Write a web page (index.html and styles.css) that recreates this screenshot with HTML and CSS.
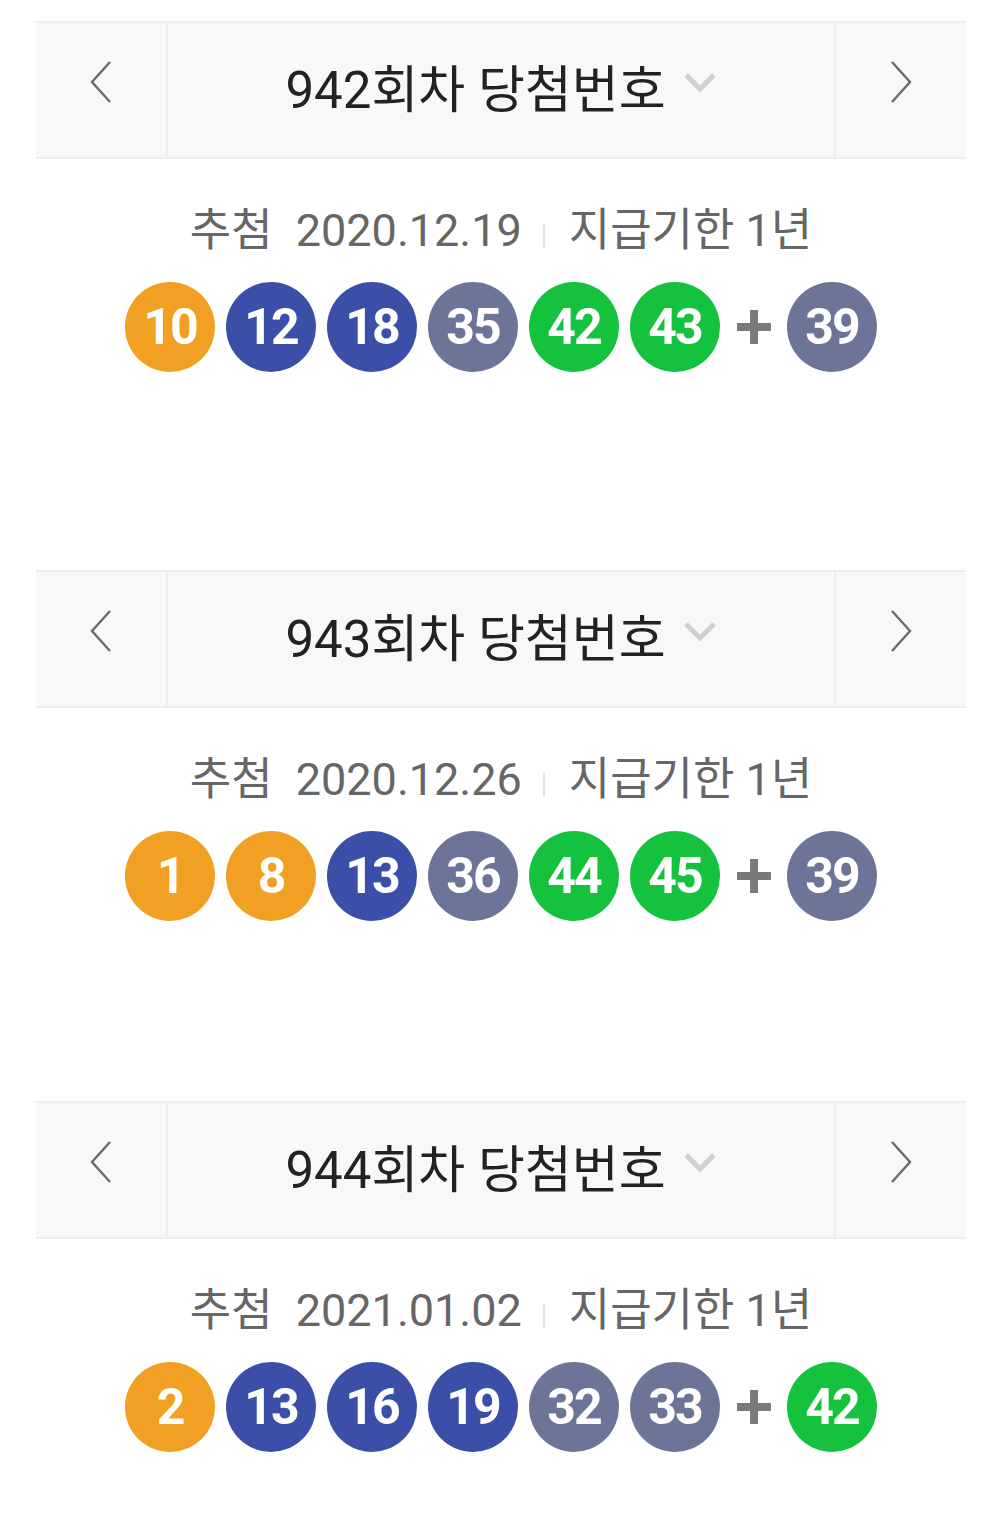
FILE: index.html
```html
<!DOCTYPE html>
<html lang="ko">
<head>
  <meta charset="UTF-8">
  <meta name="viewport" content="width=device-width, initial-scale=1.0">
  <title>당첨번호</title>
  <link rel="stylesheet" href="styles.css">
</head>
<body>
  <div class="draw draw-first">
    <div class="draw-head">
      <button class="nav-btn" type="button" aria-label="이전 회차">
        <svg width="24" height="44" viewBox="0 0 24 44"><path d="M21 2 L3 22 L21 42" fill="none" stroke="#6b6b6b" stroke-width="2.4"/></svg>
      </button>
      <div class="draw-title">
        <span>942회차 당첨번호</span>
        <svg class="caret" width="34" height="22" viewBox="0 0 34 22"><path d="M3 3 L17 17 L31 3" fill="none" stroke="#cfcfcf" stroke-width="5"/></svg>
      </div>
      <button class="nav-btn" type="button" aria-label="다음 회차">
        <svg width="24" height="44" viewBox="0 0 24 44"><path d="M3 2 L21 22 L3 42" fill="none" stroke="#6b6b6b" stroke-width="2.4"/></svg>
      </button>
    </div>
    <p class="draw-date"><span class="label">추첨</span> 2020.12.19<span class="sep"></span>지급기한 1년</p>
    <div class="balls">
      <span class="ball ball-y">10</span>
      <span class="ball ball-b">12</span>
      <span class="ball ball-b">18</span>
      <span class="ball ball-g">35</span>
      <span class="ball ball-n">42</span>
      <span class="ball ball-n">43</span>
      <span class="plus"><svg width="36" height="36" viewBox="0 0 36 36"><path d="M18 1 V35 M1 18 H35" stroke="#7a7a7a" stroke-width="8"/></svg></span>
      <span class="ball ball-g">39</span>
    </div>
  </div>

  <div class="draw draw-second">
    <div class="draw-head">
      <button class="nav-btn" type="button" aria-label="이전 회차">
        <svg width="24" height="44" viewBox="0 0 24 44"><path d="M21 2 L3 22 L21 42" fill="none" stroke="#6b6b6b" stroke-width="2.4"/></svg>
      </button>
      <div class="draw-title">
        <span>943회차 당첨번호</span>
        <svg class="caret" width="34" height="22" viewBox="0 0 34 22"><path d="M3 3 L17 17 L31 3" fill="none" stroke="#cfcfcf" stroke-width="5"/></svg>
      </div>
      <button class="nav-btn" type="button" aria-label="다음 회차">
        <svg width="24" height="44" viewBox="0 0 24 44"><path d="M3 2 L21 22 L3 42" fill="none" stroke="#6b6b6b" stroke-width="2.4"/></svg>
      </button>
    </div>
    <p class="draw-date"><span class="label">추첨</span> 2020.12.26<span class="sep"></span>지급기한 1년</p>
    <div class="balls">
      <span class="ball ball-y">1</span>
      <span class="ball ball-y">8</span>
      <span class="ball ball-b">13</span>
      <span class="ball ball-g">36</span>
      <span class="ball ball-n">44</span>
      <span class="ball ball-n">45</span>
      <span class="plus"><svg width="36" height="36" viewBox="0 0 36 36"><path d="M18 1 V35 M1 18 H35" stroke="#7a7a7a" stroke-width="8"/></svg></span>
      <span class="ball ball-g">39</span>
    </div>
  </div>

  <div class="draw">
    <div class="draw-head">
      <button class="nav-btn" type="button" aria-label="이전 회차">
        <svg width="24" height="44" viewBox="0 0 24 44"><path d="M21 2 L3 22 L21 42" fill="none" stroke="#6b6b6b" stroke-width="2.4"/></svg>
      </button>
      <div class="draw-title">
        <span>944회차 당첨번호</span>
        <svg class="caret" width="34" height="22" viewBox="0 0 34 22"><path d="M3 3 L17 17 L31 3" fill="none" stroke="#cfcfcf" stroke-width="5"/></svg>
      </div>
      <button class="nav-btn" type="button" aria-label="다음 회차">
        <svg width="24" height="44" viewBox="0 0 24 44"><path d="M3 2 L21 22 L3 42" fill="none" stroke="#6b6b6b" stroke-width="2.4"/></svg>
      </button>
    </div>
    <p class="draw-date"><span class="label">추첨</span> 2021.01.02<span class="sep"></span>지급기한 1년</p>
    <div class="balls">
      <span class="ball ball-y">2</span>
      <span class="ball ball-b">13</span>
      <span class="ball ball-b">16</span>
      <span class="ball ball-b">19</span>
      <span class="ball ball-g">32</span>
      <span class="ball ball-g">33</span>
      <span class="plus"><svg width="36" height="36" viewBox="0 0 36 36"><path d="M18 1 V35 M1 18 H35" stroke="#7a7a7a" stroke-width="8"/></svg></span>
      <span class="ball ball-n">42</span>
    </div>
  </div>
</body>
</html>
```

FILE: styles.css
```css
body {
  margin: 0;
  background-color: #fff;
  font-family: Roboto, "Noto Sans CJK KR", sans-serif;
  color: #222;
}
.draw {
  margin: 180px 35px 0 36px;
}
.draw-first {
  margin-top: 21px;
}
.draw-second {
  margin-top: 198px;
}
.draw-head {
  display: grid;
  grid-template-columns: 130px 1fr 130px;
  height: 134px;
  background-color: #f7f8fa;
  border-top: 2px solid #eceef1;
  border-bottom: 2px solid #eceef1;
}
.nav-btn {
  display: flex;
  justify-content: center;
  align-items: center;
  background: none;
  border: none;
  padding: 0 0 16px;
}
.draw-title {
  display: flex;
  justify-content: center;
  align-items: center;
  gap: 17px;
  padding-bottom: 8px;
  border-left: 2px solid #eceef1;
  border-right: 2px solid #eceef1;
  font-size: 51px;
  color: #222;
}
.caret {
  margin-top: -6px;
}
.draw-date {
  margin: 46px 0 0;
  text-align: center;
  font-size: 45px;
  line-height: 52px;
  color: #666;
}
.label {
  margin-right: 12px;
}
.sep {
  display: inline-block;
  width: 2px;
  height: 24px;
  margin: 0 24px 0 21px;
  background-color: #e2e2e2;
  vertical-align: -2px;
}
.balls {
  display: flex;
  justify-content: center;
  align-items: center;
  gap: 11px;
  margin-top: 25px;
}
.ball {
  display: flex;
  justify-content: center;
  align-items: center;
  width: 90px;
  height: 90px;
  border-radius: 50%;
  color: #fff;
  font-family: Roboto, sans-serif;
  font-weight: bold;
  font-size: 50px;
  letter-spacing: -2px;
}
.ball-y { background-color: #f2a024; }
.ball-b { background-color: #3b4fa8; }
.ball-g { background-color: #6c7597; }
.ball-n { background-color: #14c23d; }
.plus {
  display: flex;
  justify-content: center;
  width: 45px;
}
```
